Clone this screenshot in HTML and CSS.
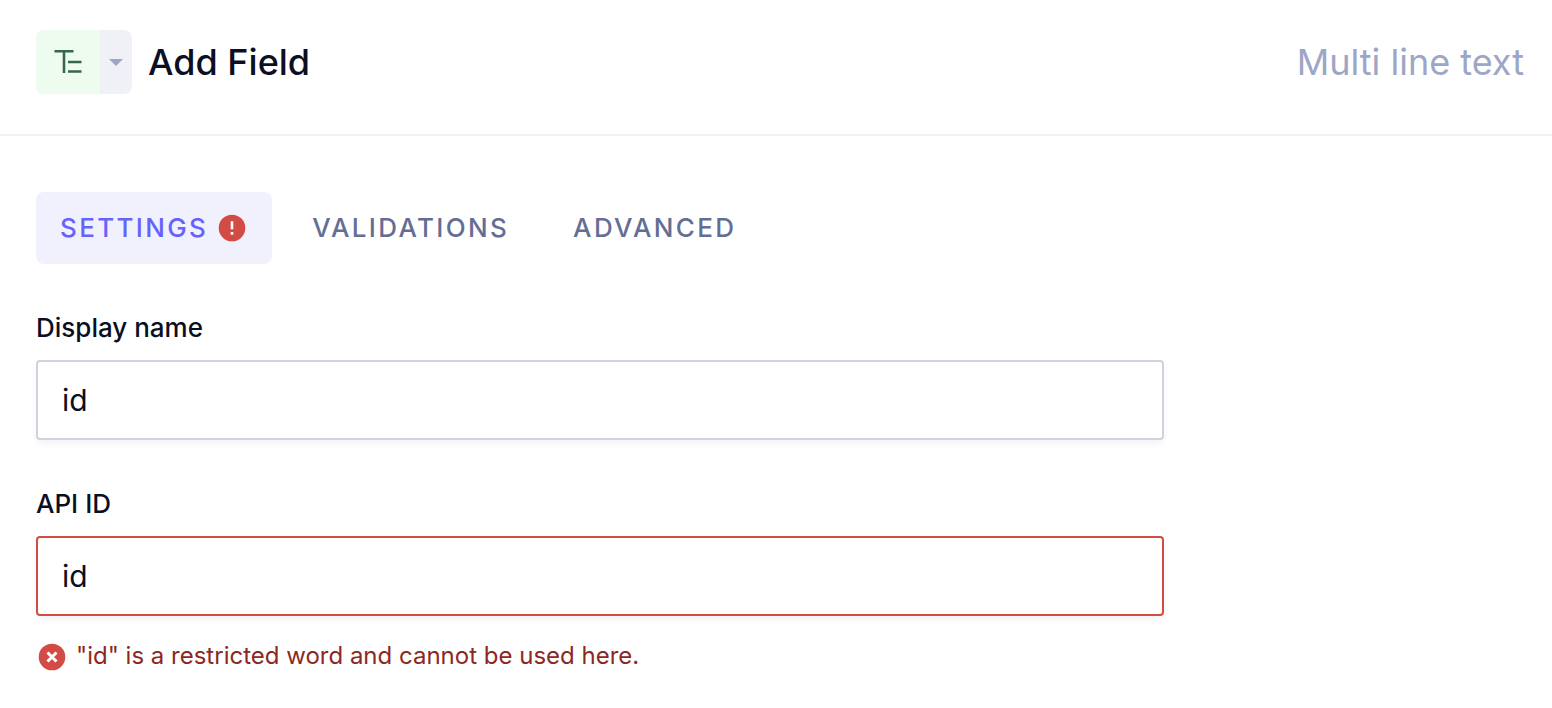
FILE: index.html
```html
<!DOCTYPE html>
<html lang="en">
<head>
<meta charset="utf-8">
<title>Add Field</title>
<link rel="stylesheet" href="styles.css">
</head>
<body>
<header class="header">
  <button class="type-picker" type="button" aria-label="Change field type">
    <span class="type-icon">
      <svg width="64" height="64" viewBox="0 0 64 64" fill="#38664d" aria-hidden="true">
        <path d="M18.500 20h19v2.600h-8.200V43h-2.600V22.600h-8.200zM32 30.700h13.500v2.600H32zM32 40.200h13.500v2.600H32z"/>
      </svg>
    </span>
    <span class="type-caret">
      <svg width="14" height="8" viewBox="0 0 14 8" fill="#9da6c6" aria-hidden="true"><path d="M0 1h14L7 8z"/></svg>
    </span>
  </button>
  <h1 class="title">Add Field</h1>
  <span class="type-name">Multi line text</span>
</header>
<main class="content">
  <div class="tabs" role="tablist">
    <button class="tab tab-active" type="button" role="tab" aria-selected="true">
      <span>SETTINGS</span>
      <svg width="32" height="32" viewBox="0 0 32 32" aria-hidden="true">
        <circle cx="16" cy="16" r="13.300" fill="#d34b45"/>
        <path d="M14.700 9.200h2.600v8h-2.600zM14.700 20h2.600v2.800h-2.600z" fill="#fff"/>
      </svg>
    </button>
    <button class="tab" type="button" role="tab" aria-selected="false">VALIDATIONS</button>
    <button class="tab" type="button" role="tab" aria-selected="false">ADVANCED</button>
  </div>
  <form class="form">
    <div class="field">
      <label class="label" for="display-name">Display name</label>
      <input class="input" id="display-name" type="text" value="id">
    </div>
    <div class="field">
      <label class="label" for="api-id">API ID</label>
      <input class="input input-error" id="api-id" type="text" value="id" aria-invalid="true" aria-describedby="api-id-error">
      <p class="error" id="api-id-error">
        <svg width="32" height="32" viewBox="0 0 32 32" aria-hidden="true">
          <circle cx="16" cy="17" r="13.300" fill="#d34b45"/>
          <path d="M11.500 12.500l9 9M20.500 12.500l-9 9" stroke="#fff" stroke-width="3"/>
        </svg>
        <span>"id" is a restricted word and cannot be used here.</span>
      </p>
    </div>
  </form>
</main>
</body>
</html>
```

FILE: styles.css
```css
* {
  box-sizing: border-box;
}

body {
  margin: 0;
  background: #fff;
  color: #0a0f24;
  font-family: Inter, "Liberation Sans", sans-serif;
}

button,
input {
  font: inherit;
  color: inherit;
}

.header {
  display: flex;
  align-items: center;
  gap: 16px;
  padding: 30px 28px 40px 36px;
  border-bottom: 2px solid #f0f1f6;
}

.type-picker {
  display: flex;
  padding: 0;
  border: 0;
  border-radius: 8px;
  overflow: hidden;
  background: #eff1f6;
  cursor: pointer;
}

.type-icon {
  display: flex;
  background: #edfcef;
}

.type-caret {
  display: flex;
  align-items: center;
  justify-content: center;
  width: 32px;
}

.title {
  margin: 0;
  font-size: 36px;
  line-height: 48px;
  font-weight: 500;
}

.type-name {
  margin-left: auto;
  color: #9da6c6;
  font-size: 36px;
  line-height: 48px;
}

.content {
  padding: 56px 36px 36px;
}

.tabs {
  display: flex;
  gap: 16px;
}

.tab {
  display: flex;
  align-items: center;
  gap: 8px;
  padding: 16px 24px;
  border: 0;
  border-radius: 8px;
  background: none;
  color: #646e95;
  font-size: 26px;
  line-height: 40px;
  font-weight: 500;
  letter-spacing: 0.09em;
  cursor: pointer;
}

.tab-active {
  background: #f1f1fe;
  color: #6663fd;
}

.form {
  display: flex;
  flex-direction: column;
  gap: 44px;
  max-width: 1128px;
  margin-top: 44px;
}

.field {
  display: flex;
  flex-direction: column;
}

.label {
  margin-bottom: 12px;
  font-size: 26px;
  line-height: 40px;
  font-weight: 500;
}

.input {
  width: 100%;
  height: 80px;
  padding: 0 24px;
  border: 2px solid #d0d2e0;
  border-radius: 4px;
  background: #fff;
  box-shadow: 0 4px 8px rgba(0, 0, 0, 0.05);
  font-size: 30px;
}

.input-error {
  border-color: #d34b45;
}

.error {
  display: flex;
  align-items: center;
  gap: 8px;
  margin: 24px 0 0;
  color: #8c2822;
  font-size: 24px;
  line-height: 32px;
}
```
